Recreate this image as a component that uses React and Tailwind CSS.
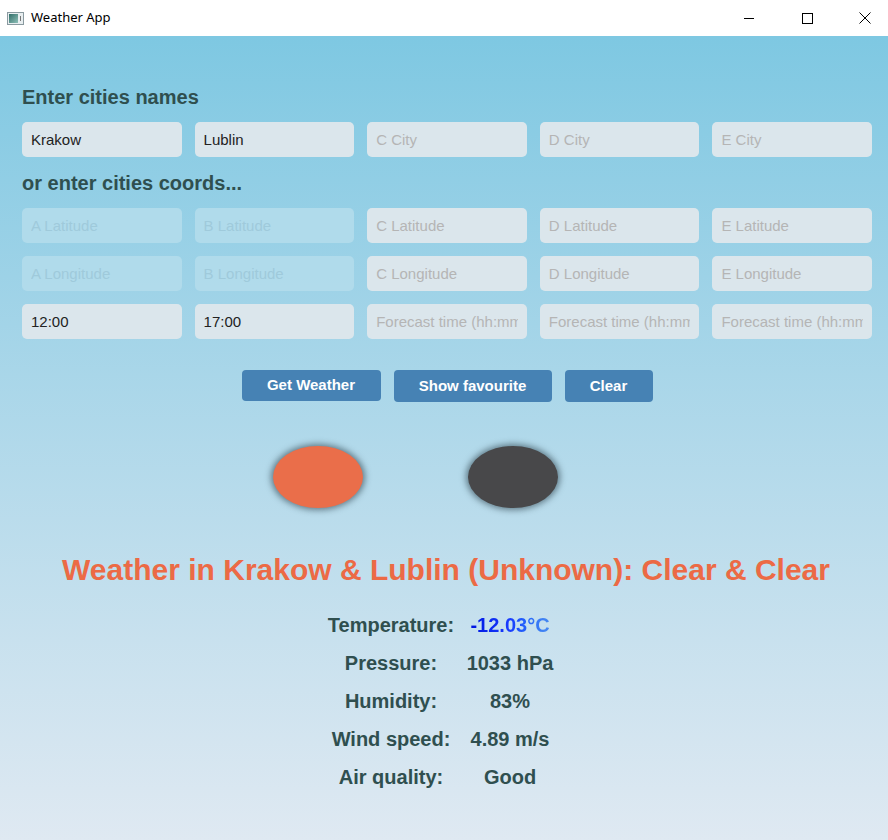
const names = ["Krakow", "Lublin", "", "", ""];
const namePh = ["A City", "B City", "C City", "D City", "E City"];
const letters = ["A", "B", "C", "D", "E"];
const times = ["12:00", "17:00", "", "", ""];

function Field({ value, placeholder, disabled }) {
  return (
    <div
      className={
        "h-[35px] rounded-[5px] px-[9px] pt-[1px] flex items-center text-[15px] " +
        (disabled ? "bg-[#b2dbeb]/90" : "bg-[#dbe6ec]")
      }
    >
      <div className="w-full overflow-hidden whitespace-nowrap">
        {value ? (
          <span className="text-[#222]">{value}</span>
        ) : (
          <span className={disabled ? "text-[#9fcadb]" : "text-[#b5b5b5]"}>{placeholder}</span>
        )}
      </div>
    </div>
  );
}

function Row({ children }) {
  return <div className="grid grid-cols-5 gap-x-[13px]">{children}</div>;
}

const stats = [
  ["Temperature:", null],
  ["Pressure:", "1033 hPa"],
  ["Humidity:", "83%"],
  ["Wind speed:", "4.89 m/s"],
  ["Air quality:", "Good"],
];

export default function App() {
  return (
    <div className="w-[888px] h-[840px] flex flex-col font-['Liberation_Sans',Arial,sans-serif]">
      <div className="h-[36px] bg-white flex items-center shrink-0">
        <div className="ml-[7px] w-[17px] h-[13px] border border-[#8a9aa0] bg-[#e8eef0] flex items-center px-[1px]">
          <div className="w-[9px] h-[9px] bg-gradient-to-br from-[#2f6f6a] to-[#8fc0b8]" />
          <div className="ml-[2px] w-[1px] h-[5px] bg-[#777]" />
        </div>
        <span className="ml-[7px] text-[13px] text-black font-['Noto_Sans',sans-serif]">Weather App</span>
        <div className="ml-auto flex h-full">
          <div className="w-[46px] flex items-center justify-center">
            <div className="w-[10px] h-[1px] bg-black" />
          </div>
          <div className="w-[46px] ml-[12px] flex items-center justify-center">
            <div className="w-[11px] h-[11px] border border-black" />
          </div>
          <div className="w-[46px] ml-[12px] flex items-center justify-center">
            <svg width="12" height="12" viewBox="0 0 12 12">
              <path d="M0.5 0.5 L11.5 11.5 M11.5 0.5 L0.5 11.5" stroke="black" strokeWidth="1" />
            </svg>
          </div>
        </div>
      </div>

      <div className="flex-1 bg-gradient-to-b from-[#7ec8e2] to-[#dfe9f2] pl-[22px] pr-[16px] pt-[50px] text-[#2f4f4f]">
        <h2 className="text-[20px] font-bold leading-[22px]">Enter cities names</h2>
        <div className="mt-[14px]">
          <Row>
            {names.map((n, i) => (
              <Field key={i} value={n} placeholder={namePh[i]} />
            ))}
          </Row>
        </div>
        <h2 className="mt-[15px] text-[20px] font-bold leading-[22px]">or enter cities coords...</h2>
        <div className="mt-[14px] flex flex-col gap-y-[13px]">
          <Row>
            {letters.map((l, i) => (
              <Field key={i} placeholder={l + " Latitude"} disabled={i < 2} />
            ))}
          </Row>
          <Row>
            {letters.map((l, i) => (
              <Field key={i} placeholder={l + " Longitude"} disabled={i < 2} />
            ))}
          </Row>
          <Row>
            {times.map((t, i) => (
              <Field key={i} value={t} placeholder="Forecast time (hh:mm)" />
            ))}
          </Row>
        </div>

        <div className="mt-[31px] flex justify-center gap-[13px] text-white text-[15px] font-bold">
          <button className="h-[31px] w-[139px] rounded-[4px] bg-[#4682b4]">Get Weather</button>
          <button className="h-[32px] w-[158px] rounded-[4px] bg-[#4682b4]">Show favourite</button>
          <button className="h-[32px] w-[88px] rounded-[4px] bg-[#4682b4]">Clear</button>
        </div>

        <div className="mt-[44px] flex justify-center gap-[105px] pr-[64px]">
          <div className="w-[90px] h-[62px] rounded-[50%] bg-[#ea6e4a] shadow-[0_0_6px_2px_rgba(40,60,70,0.6)]" />
          <div className="w-[90px] h-[62px] rounded-[50%] bg-[#48484a] shadow-[0_0_6px_2px_rgba(40,60,70,0.6)]" />
        </div>

        <h1 className="mt-[45px] text-center text-[30px] font-bold text-[#ec6a45] leading-[34px] -ml-[2px]">
          Weather in Krakow &amp; Lublin (Unknown): Clear &amp; Clear
        </h1>

        <div className="mt-[27px] grid grid-cols-[130px_108px] justify-center gap-y-[16px] text-[20px] font-bold leading-[22px] -ml-[4px]">
          {stats.map(([label, value]) => (
            <div key={label} className="contents">
              <div className="text-center">{label}</div>
              <div className="text-center">
                {value ?? (
                  <span className="bg-gradient-to-r from-[#0010e0] via-[#1a3cff] to-[#4a8cf0] bg-clip-text text-transparent">
                    -12.03°C
                  </span>
                )}
              </div>
            </div>
          ))}
        </div>
      </div>
    </div>
  );
}
